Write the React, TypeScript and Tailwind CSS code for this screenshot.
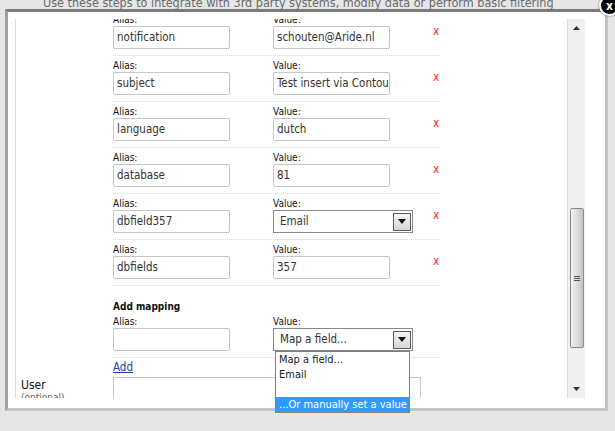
import React from 'react';

type Mapping = { alias: string; value: string; select?: boolean };

const mappings: Mapping[] = [
  { alias: 'notification', value: 'schouten@Aride.nl' },
  { alias: 'subject', value: 'Test insert via Contour' },
  { alias: 'language', value: 'dutch' },
  { alias: 'database', value: '81' },
  { alias: 'dbfield357', value: 'Email', select: true },
  { alias: 'dbfields', value: '357' },
];

function TextBox({ value }: { value?: string }) {
  return (
    <div className="h-[23px] w-[117px] overflow-hidden whitespace-nowrap rounded-[2px] border border-[#c6c6c6] bg-white pl-[3px] text-[11.5px] leading-[21px] text-[#333]">
      {value}
    </div>
  );
}

function SelectBox({ value }: { value: string }) {
  return (
    <div className="flex h-[23px] w-[140px] items-center justify-between border border-[#8a8a8a] bg-white pl-[6px] pr-[1px] text-[11.5px] text-[#333]">
      <span>{value}</span>
      <span className="flex h-[18px] w-[18px] items-center justify-center border border-[#5a5a5a] bg-gradient-to-b from-[#f4f4f4] to-[#d6d6d6]">
        <svg width="8" height="5" viewBox="0 0 8 5">
          <path d="M0 0h8L4 5z" fill="#111" />
        </svg>
      </span>
    </div>
  );
}

function Label({ children }: { children: React.ReactNode }) {
  return <div className="h-[13px] text-[10px] leading-[13px] text-[#111]">{children}</div>;
}

function MappingRow({ m }: { m: Mapping }) {
  return (
    <div className="w-[327px] border-b border-dotted border-[#d8d8d8] pb-[6px] pt-[3px]">
      <div className="flex">
        <div className="w-[160px]">
          <Label>Alias:</Label>
          <TextBox value={m.alias} />
        </div>
        <div className="w-[160px]">
          <Label>Value:</Label>
          {m.select ? <SelectBox value={m.value} /> : <TextBox value={m.value} />}
        </div>
        <div className="pt-[12px] text-[12px] leading-[12px] text-[#ff2a2a]">x</div>
      </div>
    </div>
  );
}

function Scrollbar() {
  return (
    <div className="flex w-[18px] flex-col items-center border-l border-[#dcdcdc] bg-[#f0f0f0]">
      <div className="flex h-[18px] w-full items-center justify-center">
        <svg width="7" height="4" viewBox="0 0 7 4">
          <path d="M3.5 0L7 4H0z" fill="#333" />
        </svg>
      </div>
      <div className="h-[171px]" />
      <div className="flex h-[140px] w-[14px] flex-col items-center justify-center gap-[1px] rounded-[2px] border border-[#8c8c8c] bg-gradient-to-r from-[#f2f2f2] via-[#dcdcdc] to-[#c4c4c4]">
        <div className="h-px w-[6px] bg-[#555]" />
        <div className="h-px w-[6px] bg-[#555]" />
        <div className="h-px w-[6px] bg-[#555]" />
      </div>
      <div className="flex-1" />
      <div className="flex h-[18px] w-full items-center justify-center">
        <svg width="7" height="4" viewBox="0 0 7 4">
          <path d="M0 0h7L3.5 4z" fill="#333" />
        </svg>
      </div>
    </div>
  );
}

export default function App() {
  return (
    <div
      className="relative h-[431px] w-[615px] overflow-hidden bg-[#e6e6e6]"
      style={{ fontFamily: '"DejaVu Sans Condensed", "DejaVu Sans", sans-serif' }}
    >
      <div className="flex h-[9px]">
        <p className="-mt-[5px] whitespace-nowrap pl-[43px] text-[12.5px] leading-[15px] text-[#6a6a6a]">
          Use these steps to integrate with 3rd party systems, modify data or perform basic filtering
        </p>
      </div>

      <div className="ml-[5px] h-[402px] w-[603px] border-[3px] border-[#c4c4c4] border-l-[#a0a0a0] border-t-[#7c7c7c] bg-white pl-[7px] pt-[7px]">
        <div className="flex h-[379px] w-[570px]">
          <div className="w-[552px] overflow-hidden border-l border-[#dcdcdc]">
            <div className="-mt-[9px] pl-[97px]">
              {mappings.map((m) => (
                <MappingRow key={m.alias} m={m} />
              ))}

              <div className="w-[327px] border-b border-dotted border-[#d8d8d8] pb-[6px] pt-[14px]">
                <div className="h-[15px] text-[10px] font-bold leading-[14px] text-[#111]">Add mapping</div>
                <div className="flex">
                  <div className="w-[160px]">
                    <Label>Alias:</Label>
                    <TextBox />
                  </div>
                  <div className="w-[160px]">
                    <Label>Value:</Label>
                    <SelectBox value="Map a field..." />
                  </div>
                </div>
              </div>
              <div className="pt-[2px] text-[11.5px] leading-[15px]">
                <a className="text-[#1a3ea6] underline">Add</a>
              </div>
            </div>

            <div className="mt-[2px] flex">
              <div className="w-[97px] pl-[5px] pt-[2px]">
                <div className="text-[12px] leading-[13px] text-[#111]">User</div>
                <div className="text-[10px] leading-[12px] text-[#666]">(optional)</div>
              </div>
              <div className="h-[60px] w-[308px] border border-[#c6c6c6]" />
            </div>
          </div>
          <Scrollbar />
        </div>
      </div>

      <div className="absolute left-[275px] top-[351px] w-[135px] whitespace-nowrap border border-[#7f7f7f] bg-white text-[11px] leading-[15px] text-[#222]">
        <div className="pl-[3px]">Map a field...</div>
        <div className="pl-[3px]">Email</div>
        <div className="h-[15px]" />
        <div className="border border-dotted border-[#c87a2a] bg-[#3399ff] pl-[2px] leading-[13px] text-white">...Or manually set a value</div>
      </div>

      <div className="absolute -top-[5px] left-[599px] flex h-[21px] w-[21px] items-center justify-center rounded-full border-2 border-white bg-black shadow-[0_0_2px_#444]">
        <span className="mt-[1px] text-[12px] font-bold leading-none text-white">x</span>
      </div>
    </div>
  );
}
